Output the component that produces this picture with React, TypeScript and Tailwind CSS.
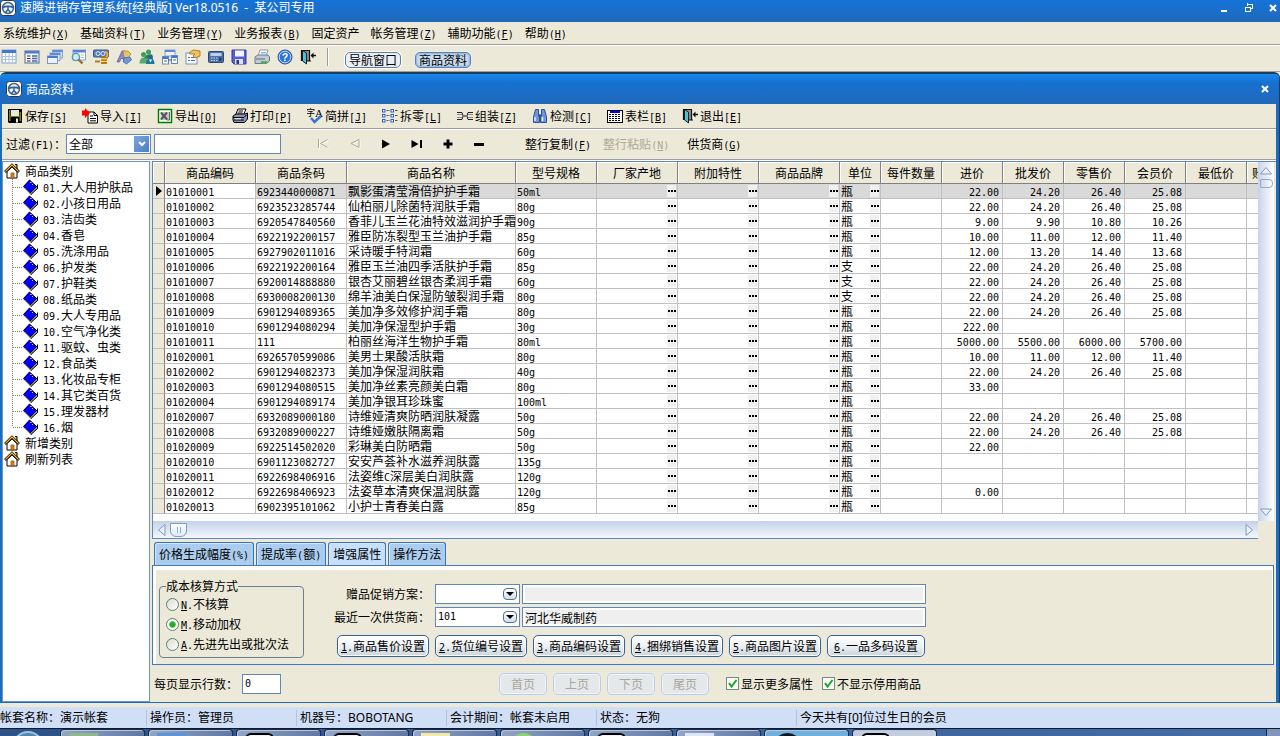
import type { ReactNode } from "react";
import clsx from "clsx";

type Row = {
  code: string;
  barcode: string;
  name: string;
  spec: string;
  unit: string;
  prices: string[];
};

const STD = ["22.00", "24.20", "26.40", "25.08"];

const ROWS: Row[] = [
  { code: "01010001", barcode: "6923440000871", name: "飘影蛋清莹滑倍护护手霜", spec: "50ml", unit: "瓶", prices: STD },
  { code: "01010002", barcode: "6923523285744", name: "仙柏丽儿除菌特润肤手霜", spec: "80g", unit: "瓶", prices: STD },
  { code: "01010003", barcode: "6920547840560", name: "香菲儿玉兰花油特效滋润护手霜", spec: "90g", unit: "瓶", prices: ["9.00", "9.90", "10.80", "10.26"] },
  { code: "01010004", barcode: "6922192200157", name: "雅臣防冻裂型玉兰油护手霜", spec: "85g", unit: "瓶", prices: ["10.00", "11.00", "12.00", "11.40"] },
  { code: "01010005", barcode: "6927902011016", name: "采诗暖手特润霜", spec: "60g", unit: "瓶", prices: ["12.00", "13.20", "14.40", "13.68"] },
  { code: "01010006", barcode: "6922192200164", name: "雅臣玉兰油四季活肤护手霜", spec: "85g", unit: "支", prices: STD },
  { code: "01010007", barcode: "6920014888880", name: "银杏艾丽碧丝银杏柔润手霜", spec: "60g", unit: "支", prices: STD },
  { code: "01010008", barcode: "6930008200130", name: "绵羊油美白保湿防皱裂润手霜", spec: "80g", unit: "支", prices: STD },
  { code: "01010009", barcode: "6901294089365", name: "美加净多效修护润手霜", spec: "80g", unit: "瓶", prices: STD },
  { code: "01010010", barcode: "6901294080294", name: "美加净保湿型护手霜", spec: "30g", unit: "瓶", prices: ["222.00"] },
  { code: "01010011", barcode: "111", name: "柏丽丝海洋生物护手霜", spec: "80ml", unit: "瓶", prices: ["5000.00", "5500.00", "6000.00", "5700.00"] },
  { code: "01020001", barcode: "6926570599086", name: "美男士果酸活肤霜", spec: "80g", unit: "瓶", prices: ["10.00", "11.00", "12.00", "11.40"] },
  { code: "01020002", barcode: "6901294082373", name: "美加净保湿润肤霜", spec: "40g", unit: "瓶", prices: STD },
  { code: "01020003", barcode: "6901294080515", name: "美加净丝素亮颜美白霜", spec: "80g", unit: "瓶", prices: ["33.00"] },
  { code: "01020004", barcode: "6901294089174", name: "美加净银耳珍珠蜜", spec: "100ml", unit: "瓶", prices: [] },
  { code: "01020007", barcode: "6932089000180", name: "诗维娅清爽防晒润肤凝露", spec: "50g", unit: "瓶", prices: STD },
  { code: "01020008", barcode: "6932089000227", name: "诗维娅嫩肤隔离霜", spec: "50g", unit: "瓶", prices: STD },
  { code: "01020009", barcode: "6922514502020", name: "彩琳美白防晒霜", spec: "50g", unit: "瓶", prices: ["22.00"] },
  { code: "01020010", barcode: "6901123082727", name: "安安芦荟补水滋养润肤露", spec: "135g", unit: "瓶", prices: [] },
  { code: "01020011", barcode: "6922698406916", name: "法姿维C深层美白润肤露", spec: "120g", unit: "瓶", prices: [] },
  { code: "01020012", barcode: "6922698406923", name: "法姿草本清爽保温润肤露", spec: "120g", unit: "瓶", prices: ["0.00"] },
  { code: "01020013", barcode: "6902395101062", name: "小护士青春美白露", spec: "85g", unit: "瓶", prices: [] },
];

const CATEGORIES = [
  "01.大人用护肤品",
  "02.小孩日用品",
  "03.洁齿类",
  "04.香皂",
  "05.洗涤用品",
  "06.护发类",
  "07.护鞋类",
  "08.纸品类",
  "09.大人专用品",
  "10.空气净化类",
  "11.驱蚊、虫类",
  "12.食品类",
  "13.化妆品专柜",
  "14.其它类百货",
  "15.理发器材",
  "16.烟",
];

const MENUS = [
  "系统维护(&X)",
  "基础资料(&T)",
  "业务管理(&Y)",
  "业务报表(&B)",
  "固定资产",
  "帐务管理(&Z)",
  "辅助功能(&F)",
  "帮助(&H)",
];

const HEADERS = [
  "商品编码",
  "商品条码",
  "商品名称",
  "型号规格",
  "厂家产地",
  "附加特性",
  "商品品牌",
  "单位",
  "每件数量",
  "进价",
  "批发价",
  "零售价",
  "会员价",
  "最低价",
];

// Half-width characters use a 6px mono face; "&" marks the accelerator key.
function T({ s }: { s: string }) {
  return (
    <>
      {s.split(/([\x20-\x7e]+)/).map((part, i) => {
        if (!/^[\x20-\x7e]+$/.test(part)) return part;
        const at = part.indexOf("&");
        return (
          <span key={i} className="font-['DejaVu_Sans_Mono',monospace] text-[10px] leading-none">
            {at < 0 ? (
              part
            ) : (
              <>
                {part.slice(0, at)}
                <u>{part[at + 1]}</u>
                {part.slice(at + 2)}
              </>
            )}
          </span>
        );
      })}
    </>
  );
}

function Svg({ children, size = 16 }: { children: ReactNode; size?: number }) {
  return (
    <svg viewBox="0 0 16 16" width={size} height={size} className="shrink-0" aria-hidden="true">
      {children}
    </svg>
  );
}

function WheelIcon() {
  return (
    <Svg>
      <rect x="0.5" y="0.5" width="15" height="15" rx="3" fill="#fff" stroke="#26394f" />
      <circle cx="8" cy="8" r="5.500" fill="#eaf2fb" stroke="#47607f" strokeWidth="1.500" />
      <path d="M2.800 7.500C5 6 11 6 13.200 7.500" fill="none" stroke="#2f5f9c" strokeWidth="1.800" />
      <path d="M8 7v3M8 9.500l-2.500 3M8 9.500l2.500 3" fill="none" stroke="#2f5f9c" strokeWidth="1.400" />
    </Svg>
  );
}

const TOOL_ICONS: { label: string; art: ReactNode }[] = [
  {
    label: "表格",
    art: (
      <>
        <rect x="1" y="1" width="14" height="13" fill="#fff" stroke="#7fa3d8" />
        <rect x="1" y="1" width="14" height="3" fill="#3f78cf" />
        <path d="M1 7.500h14M1 10.500h14M4.500 4v10M8 4v10M11.500 4v10" stroke="#a9c3ea" />
      </>
    ),
  },
  {
    label: "表单",
    art: (
      <>
        <rect x="1" y="2" width="14" height="12" fill="#f4f7fc" stroke="#4c6a97" />
        <rect x="1" y="2" width="14" height="2.500" fill="#4f7dc4" />
        <path d="M3 7h3.500M3 9.500h3.500M3 12h3.500" stroke="#333" />
        <path d="M8 7h5.500M8 9.500h5.500M8 12h5.500" stroke="#4c6a97" strokeWidth="1.500" />
      </>
    ),
  },
  {
    label: "层叠",
    art: (
      <>
        <rect x="5.500" y="1" width="10" height="8" fill="#c9daf3" stroke="#8aa6d6" />
        <rect x="5.500" y="1" width="10" height="2" fill="#5c8cd8" />
        <rect x="3" y="4" width="10" height="7.500" fill="#dfe9f8" stroke="#8aa6d6" />
        <rect x="3" y="4" width="10" height="2" fill="#5c8cd8" />
        <rect x="0.500" y="7" width="10" height="7.500" fill="#eef3fb" stroke="#8096bd" />
        <rect x="0.500" y="7" width="10" height="2" fill="#4a7bcc" />
      </>
    ),
  },
  {
    label: "查询",
    art: (
      <>
        <rect x="3" y="1" width="12.500" height="10" fill="#fff" stroke="#7fa3d8" />
        <rect x="3" y="1" width="12.500" height="2.500" fill="#5286da" />
        <path d="M11 6h3M11 8.500h3" stroke="#a9b9d4" />
        <circle cx="6" cy="8" r="3.600" fill="#c7eef7" stroke="#5f93b0" strokeWidth="1.400" />
        <path d="M8.500 10.500l4 4" stroke="#8a7136" strokeWidth="2.400" />
      </>
    ),
  },
  {
    label: "收款",
    art: (
      <>
        <rect x="0.500" y="1" width="15" height="7" rx="1" fill="#547ec2" stroke="#3b568c" />
        <circle cx="5" cy="4.500" r="2" fill="none" stroke="#dbe7fa" />
        <circle cx="10" cy="4.500" r="2" fill="none" stroke="#dbe7fa" />
        <path d="M8 8.500h7M8 11h6M2 12.500h5M8 14h6" stroke="#b57a14" strokeWidth="2" />
        <path d="M12 3c3 0 3.500 3 1 5" stroke="#e6aa2c" strokeWidth="2" fill="none" />
        <path d="M8 10h6M9 12.500h4" stroke="#f6cf63" />
      </>
    ),
  },
  {
    label: "字典",
    art: (
      <>
        <path d="M1 13L6 2h3l1 11H7.500V9.500H5L3.500 13z" fill="#8c86cf" stroke="#5a559e" strokeWidth="0.700" />
        <path d="M7 2h5l3 3-6 8z" fill="#e5c46c" stroke="#a38336" strokeWidth="0.700" />
        <path d="M8 9l6-1 1.500 3-5 4-3-2z" fill="#6f9ae2" stroke="#42589b" strokeWidth="0.700" />
      </>
    ),
  },
  {
    label: "客户",
    art: (
      <>
        <circle cx="9.500" cy="3" r="2.500" fill="#3f9f58" />
        <path d="M5 10c0-6 9-6 9 0z" fill="#2f8a4c" />
        <circle cx="4.500" cy="5.500" r="2.500" fill="#3f9f58" />
        <path d="M0.500 14.500c0-8 8.500-8 8.500 0z" fill="#58a970" />
        <path d="M7 15c0-8 8.500-8 8.500 0z" fill="#1f75a3" />
        <circle cx="11.500" cy="7.500" r="2.300" fill="#27639d" />
        <path d="M10 10.500l1.500 3 1.500-3z" fill="#fff" />
      </>
    ),
  },
  {
    label: "关系",
    art: (
      <>
        <rect x="3" y="1" width="10" height="6" fill="#eef3fb" stroke="#8aa0c8" />
        <rect x="3" y="1" width="10" height="2" fill="#5c8cd8" />
        <rect x="0.500" y="7.500" width="6" height="7.500" fill="#fff" stroke="#6a87bb" />
        <rect x="9.500" y="6.500" width="6" height="8" fill="#fff" stroke="#6a87bb" />
        <path d="M1 9h5M10 8h5" stroke="#3f78cf" strokeWidth="2" />
        <path d="M2 12h3M11 11h3M6 11h4" stroke="#44618f" />
      </>
    ),
  },
  {
    label: "属性",
    art: (
      <>
        <rect x="1" y="4" width="11" height="11" fill="#f7f9fc" stroke="#7b93bb" />
        <path d="M3 8.500h2M6 8.500h4M3 11.500h2M6 11.500h4" stroke="#5b6f94" />
        <path d="M4 4l4-3 7 1v5l-5 2-2-2 2-2H5z" fill="#f2c25c" stroke="#9c6b1c" strokeWidth="0.800" />
      </>
    ),
  },
  {
    label: "计算器",
    art: (
      <>
        <rect x="0.500" y="2.500" width="15" height="11" rx="1" fill="#4e70a8" stroke="#2d4774" />
        <rect x="2.500" y="4" width="11" height="3" fill="#bcd0ee" />
        <path d="M3 9h7M3 11.500h7" stroke="#c5d5ee" strokeDasharray="1.500 1" />
        <rect x="11" y="8.500" width="2.500" height="3.500" fill="#27406b" />
      </>
    ),
  },
  {
    label: "保存",
    art: (
      <>
        <path d="M1 1h14v14H3l-2-2z" fill="#5560cf" stroke="#363f9e" />
        <rect x="4" y="1.500" width="9" height="6" fill="#f3f5ff" />
        <rect x="4" y="10" width="8" height="5" fill="#dcdff5" />
        <rect x="5.500" y="11" width="2.500" height="4" fill="#2c3380" />
      </>
    ),
  },
  {
    label: "打印",
    art: (
      <>
        <path d="M6 1h8l-2 6H4z" fill="#fff" stroke="#8f9bab" />
        <path d="M1 8l3-2h10l1.500 2v4l-3 2.500H1z" fill="#c3cad6" stroke="#6b788c" />
        <path d="M7 12h6v2.500H7z" fill="#57b34b" />
        <path d="M7 3.500h5M6.500 5h5" stroke="#8bb0dd" />
        <path d="M2 10h9" stroke="#5c6879" />
      </>
    ),
  },
  {
    label: "帮助主题",
    art: (
      <>
        <circle cx="8" cy="8" r="7" fill="#2f72d8" stroke="#1f55ad" />
        <circle cx="8" cy="8" r="5.800" fill="none" stroke="#cfe1fa" strokeWidth="0.900" />
        <text x="8" y="11.800" fontSize="10.500" fontWeight="bold" textAnchor="middle" fill="#fff" fontFamily="Liberation Sans">
          ?
        </text>
      </>
    ),
  },
  { label: "退出系统", art: <DoorArt /> },
];

function DoorArt() {
  return (
    <>
      <path d="M1.500 12V1.500h8V12" fill="#8f8f8f" stroke="#111" strokeWidth="1.200" />
      <path d="M2.500 1.500l4 2.500v11l-4-3z" fill="#4fc0d8" stroke="#111" strokeWidth="0.900" />
      <path d="M6 12h5" stroke="#111" />
      <path d="M10.500 6.500l3-3v2.200H16v1.600h-2.500v2.200z" fill="#111" />
    </>
  );
}

const ACTIONS: { text: string; art: ReactNode }[] = [
  {
    text: "保存[&S]",
    art: (
      <>
        <path d="M1 1h14v14H2l-1-1z" fill="#000" />
        <path d="M2 2h1.500v11H2zM12.500 4H14v9h-1.500zM3 8h10v1H3z" fill="#808000" />
        <rect x="4" y="2" width="8" height="6" fill="#ece9d8" />
        <rect x="9" y="10.500" width="2" height="4" fill="#ece9d8" />
      </>
    ),
  },
  {
    text: "导入[&I]",
    art: (
      <>
        <path d="M6 4h6l3.500 3.500V15H6z" fill="#fff" stroke="#000" />
        <path d="M12 4v3.500h3.500M8 8h3M8 10.500h6M8 12.800h6" stroke="#000" fill="none" />
        <path d="M0 2.500h3V0l5 5-5 5V7.500H0z" fill="#f00" />
      </>
    ),
  },
  {
    text: "导出[&O]",
    art: (
      <>
        <rect x="1.500" y="1.500" width="13" height="13" fill="#fff" stroke="#008000" strokeWidth="1.500" />
        <rect x="3.500" y="4" width="9" height="8" fill="#c8c8c8" />
        <path d="M4 4.500l6 7M10 4.500l-6 7" stroke="#555" strokeWidth="2" />
        <path d="M10 12h2.500M12.500 4v8" stroke="#666" />
      </>
    ),
  },
  {
    text: "打印[&P]",
    art: (
      <>
        <path d="M6 1h8l-2.500 6H3.500z" fill="#fff" stroke="#000" />
        <path d="M1 8l3-2h9l2.500-1v6l-3 3.500H2L1 12z" fill="#8d93b8" stroke="#000" />
        <path d="M1 9.500h11l3-3M2 12h10" stroke="#000" fill="none" />
        <path d="M6.500 3h4.500M5.500 5h5" stroke="#000" />
        <path d="M3 10.800h6" stroke="#fff" />
      </>
    ),
  },
  {
    text: "简拼[&J]",
    art: (
      <>
        <text x="-1" y="8" fontSize="9" fill="#000" fontFamily="Noto Sans CJK SC">字</text>
        <text x="8" y="9" fontSize="11" fill="#000" fontFamily="Liberation Serif">A</text>
        <path d="M4 10l3.500 4L14 8" fill="none" stroke="#3f72d0" strokeWidth="2.500" />
      </>
    ),
  },
  {
    text: "拆零[&L]",
    art: (
      <>
        <g fill="#fff" stroke="#2f5fc4">
          <rect x="0.500" y="1.500" width="2.500" height="2.500" />
          <rect x="0.500" y="6.500" width="2.500" height="2.500" />
          <rect x="0.500" y="11.500" width="2.500" height="2.500" />
          <rect x="9" y="1.500" width="2.500" height="2.500" />
          <rect x="9" y="6.500" width="2.500" height="2.500" />
          <rect x="9" y="11.500" width="2.500" height="2.500" />
        </g>
        <path d="M4.500 2.500h3M4.500 7.500h3M4.500 12.500h3M13 2.500h3M13 7.500h3M13 12.500h3" stroke="#555" strokeDasharray="2 0.500" />
      </>
    ),
  },
  {
    text: "组装[&Z]",
    art: (
      <>
        <path d="M0 4.500h5l1 3h4l1-3h5M0 11.500h5l1-3h4l1 3h5" fill="none" stroke="#222" />
        <path d="M0 6.500h5M11 6.500h5M0 9.500h5M11 9.500h5" stroke="#888" />
        <path d="M5 8h6" stroke="#777" strokeWidth="2" />
      </>
    ),
  },
  {
    text: "检测[&C]",
    art: (
      <>
        <path d="M3.500 1.500h3V6l1 2v6.500h-6V9z" fill="#6f95dc" stroke="#2e4f92" />
        <path d="M12.500 1.500h-3V6l-1 2v6.500h6V9z" fill="#6f95dc" stroke="#2e4f92" />
        <path d="M3 9v4M10.500 9v4" stroke="#e1ebfb" strokeWidth="1.500" />
        <path d="M6 7.500h4" stroke="#2e4f92" strokeWidth="2" />
      </>
    ),
  },
  {
    text: "表栏[&B]",
    art: (
      <g shapeRendering="crispEdges">
        <rect x="0" y="2" width="16" height="13" fill="#000" />
        <rect x="1" y="3" width="14" height="11" fill="#fff" />
        <rect x="3" y="3" width="10" height="2" fill="#00f" />
        <path d="M2 6.500h12M2 8.500h12M2 10.500h12M2 12.500h12" stroke="#000" strokeDasharray="2 1" />
      </g>
    ),
  },
  { text: "退出[&E]", art: <DoorArt /> },
];

function HomeIcon() {
  return (
    <Svg>
      <path d="M3 8.500V15h10V8.500L8 4z" fill="#fff" stroke="#000" />
      <path d="M11 1.500h2V6" fill="#f90" stroke="#000" />
      <path d="M1 9L8 2l7 7" fill="none" stroke="#000" strokeWidth="2.600" />
      <path d="M1.400 8.600L8 2l6.600 6.600" fill="none" stroke="#ffb52e" strokeWidth="1.300" />
      <path d="M7 15v-5h3v5z" fill="#e08214" stroke="#8a4b00" strokeWidth="0.700" />
    </Svg>
  );
}

function BookIcon() {
  return (
    <Svg>
      <path d="M7 14.500l1 1 6.500-6V6" fill="#8a8a8a" stroke="#000" />
      <path d="M6.500 1L0.500 7.500 7 14l6.500-6.500z" fill="#00f" stroke="#000" />
      <path d="M1 8.500l6 6" stroke="#9a9a9a" />
      <path d="M7 3.500h1.500M9 5.500h1" stroke="#fff" strokeWidth="0.800" />
      <path d="M14.500 5.500v4" stroke="#000" />
    </Svg>
  );
}

function Branch({ last }: { last: boolean }) {
  return (
    <svg width="12" height="16" className="shrink-0" shapeRendering="crispEdges" aria-hidden="true">
      <path d={last ? "M1.500 0V8" : "M1.500 0V16"} stroke="#808080" strokeDasharray="1 1" />
      <path d="M2 8.500H12" stroke="#808080" strokeDasharray="1 1" />
    </svg>
  );
}

function CloseGlyph() {
  return (
    <svg width="8" height="8" viewBox="0 0 8 8" aria-hidden="true">
      <path d="M1 1l6 6M7 1L1 7" stroke="#fff" strokeWidth="2" />
    </svg>
  );
}

function Divider() {
  return <div className="h-0.5 shrink-0 border-b border-white bg-[#9d9da1]" />;
}

function TreePanel() {
  return (
    <nav className="w-[148px] shrink-0 border border-[#6b95c8] bg-white pt-px leading-4" aria-label="商品类别">
      <a href="#all" className="flex h-4 items-center gap-1 pl-px">
        <HomeIcon />
        <span className="pl-px">商品类别</span>
      </a>
      <ul className="pl-2">
        {CATEGORIES.map((c, i) => (
          <li key={c} className="h-4">
            <a href={`#c${i + 1}`} className="flex h-4 items-center whitespace-nowrap">
              <Branch last={i === CATEGORIES.length - 1} />
              <BookIcon />
              <span className="pl-1">
                <T s={c} />
              </span>
            </a>
          </li>
        ))}
      </ul>
      {["新增类别", "刷新列表"].map((t) => (
        <a key={t} href="#action" className="flex h-4 items-center gap-1 pl-px">
          <HomeIcon />
          <span className="pl-px">{t}</span>
        </a>
      ))}
    </nav>
  );
}

function Dots() {
  return (
    <button type="button" aria-label="选择" className="flex h-3 w-[9px] items-center justify-center gap-px bg-[#f0f0f0]">
      <i className="size-0.5 bg-black" />
      <i className="size-0.5 bg-black" />
      <i className="size-0.5 bg-black" />
    </button>
  );
}

const CELL = "h-[15px] border-r border-b border-[#c0c0c0] p-0 pl-px leading-[14px] whitespace-nowrap";
const HEAD = "h-[22px] border-r border-b border-[#808080] p-0 font-normal shadow-[inset_1px_1px_0_#fff] whitespace-nowrap";

function DataGrid() {
  return (
    <div className="min-w-0 flex-1 overflow-hidden bg-white">
      <table className="w-full table-fixed border-separate border-spacing-0">
        <colgroup>
          <col className="w-3" />
          <col className="w-[91px]" />
          <col className="w-[91px]" />
          <col className="w-[169px]" />
          <col className="w-[81px]" />
          <col className="w-[81px]" />
          <col className="w-[81px]" />
          <col className="w-[81px]" />
          <col className="w-[41px]" />
          <col className="w-[61px]" />
          <col className="w-[61px]" />
          <col className="w-[61px]" />
          <col className="w-[61px]" />
          <col className="w-[61px]" />
          <col className="w-[61px]" />
          <col />
        </colgroup>
        <thead className="bg-[#ece9d8]">
          <tr>
            <th className={HEAD} />
            {HEADERS.map((h) => (
              <th key={h} className={HEAD}>
                {h}
              </th>
            ))}
            <th className="border-b border-[#808080] p-0 pl-[5px] text-left font-normal whitespace-nowrap shadow-[inset_1px_1px_0_#fff]">账</th>
          </tr>
        </thead>
        <tbody>
          {ROWS.map((r, i) => (
            <tr key={r.code} className={clsx(i === 0 && "bg-[#d9d9d9]")}>
              <td className="h-[15px] border-r border-b border-[#808080] border-b-[#c0c0c0] bg-[#ece9d8] p-0">
                {i === 0 && (
                  <svg width="7" height="10" className="ml-[3px] block" aria-hidden="true">
                    <path d="M0 0l6 5-6 5z" fill="#000" />
                  </svg>
                )}
              </td>
              <td className={clsx(CELL, "bg-white")}>
                <T s={r.code} />
              </td>
              <td className={CELL}>
                <T s={r.barcode} />
              </td>
              <td className={CELL}>
                <T s={r.name} />
              </td>
              <td className={CELL}>
                <T s={r.spec} />
              </td>
              {["产地", "特性", "品牌"].map((k) => (
                <td key={k} className={CELL}>
                  <div className="flex justify-end pr-px">
                    <Dots />
                  </div>
                </td>
              ))}
              <td className={CELL}>
                <div className="flex h-[14px] items-center justify-between pr-px">
                  {r.unit}
                  <Dots />
                </div>
              </td>
              <td className={CELL} />
              {[0, 1, 2, 3, 4].map((k) => (
                <td key={k} className={clsx(CELL, "pr-[3px] text-right")}>
                  <T s={r.prices[k] ?? ""} />
                </td>
              ))}
              <td className="border-b border-[#c0c0c0] p-0" />
            </tr>
          ))}
        </tbody>
      </table>
    </div>
  );
}

function VScroll() {
  return (
    <div className="flex w-4 shrink-0 flex-col items-center bg-linear-to-r from-[#c6d4ea] to-white py-1">
      <button type="button" aria-label="向上">
        <svg width="14" height="9" className="block" aria-hidden="true">
          <path d="M1.500 8L7 1.500 12.500 8z" fill="#e9f0f9" stroke="#7f9dc0" />
        </svg>
      </button>
      <div className="mt-1 h-[9px] w-[13px] rounded-r-sm border border-[#8fabd0] bg-linear-to-r from-[#cbd8ea] to-white" />
      <button type="button" aria-label="向下" className="mt-auto">
        <svg width="14" height="9" className="block" aria-hidden="true">
          <path d="M1.500 1L7 7.500 12.500 1z" fill="#e9f0f9" stroke="#7f9dc0" />
        </svg>
      </button>
    </div>
  );
}

function HScroll() {
  return (
    <div className="flex h-[17px] items-center bg-linear-to-b from-[#c3d1e8] to-[#f4f8fd] px-1">
      <button type="button" aria-label="向左">
        <svg width="9" height="14" className="block" aria-hidden="true">
          <path d="M8 1.500L1.500 7 8 12.500z" fill="#e9f0f9" stroke="#7f9dc0" />
        </svg>
      </button>
      <div className="ml-1 flex h-[14px] w-[17px] items-center justify-center gap-0.5 rounded-b-md border border-[#7f9dc0] bg-linear-to-b from-white to-[#dfe8f4]">
        <i className="h-1.5 w-px bg-[#8fabd0]" />
        <i className="h-1.5 w-px bg-[#8fabd0]" />
      </div>
      <button type="button" aria-label="向右" className="ml-auto">
        <svg width="9" height="14" className="block" aria-hidden="true">
          <path d="M1 1.500L7.500 7 1 12.500z" fill="#e9f0f9" stroke="#7f9dc0" />
        </svg>
      </button>
    </div>
  );
}

const TABS = ["价格生成幅度(%)", "提成率(额)", "增强属性", "操作方法"];

const COSTING = [
  { key: "N", text: "&N.不核算" },
  { key: "M", text: "&M.移动加权" },
  { key: "A", text: "&A.先进先出或批次法" },
];

const SETTINGS = [
  "&1.商品售价设置",
  "&2.货位编号设置",
  "&3.商品编码设置",
  "&4.捆绑销售设置",
  "&5.商品图片设置",
  "&6.一品多码设置",
];

const FIELD = "h-5 border border-[#5f87bd] px-0.5 outline-none";

function ComboBox({ id, value }: { id: string; value: string }) {
  return (
    <div className="flex h-5 w-[85px] items-center border border-[#5f87bd] bg-white pr-0.5">
      <input id={id} defaultValue={value} className="w-0 flex-1 px-0.5 font-['DejaVu_Sans_Mono',monospace] text-[10px] outline-none" />
      <button
        type="button"
        aria-label="展开"
        className="flex h-3 w-[14px] items-center justify-center rounded-sm border border-[#53728f] bg-linear-to-b from-white to-[#d3dfeb]"
      >
        <svg width="8" height="4" aria-hidden="true">
          <path d="M0 0h8L4 4z" fill="#000" />
        </svg>
      </button>
    </div>
  );
}

function DetailPanel() {
  return (
    <section>
      <div role="tablist" className="flex h-[23px] gap-0.5 pl-0.5">
        {TABS.map((t, i) => (
          <button
            key={t}
            type="button"
            role="tab"
            aria-selected={i === 2}
            className={clsx(
              "rounded-t-[3px] border border-b-0 border-[#3b74b5] px-1 whitespace-nowrap shadow-[inset_1px_1px_0_#d6e8fb]",
              i === 2 ? "bg-[#c6dffb]" : "bg-[#aaccee]",
            )}
          >
            <T s={t} />
          </button>
        ))}
      </div>
      <div className="mr-[2px] flex h-[100px] border border-[#4478b8] shadow-[inset_3px_4px_0_#fff,inset_-1px_0_0_#fff,0_1px_0_#dce6f2]">
        <fieldset className="mt-[13px] ml-1.5 h-[79px] w-[145px] rounded-[4px] border border-[#6a7f96] pt-px">
          <legend className="ml-[6px] bg-[#ece9d8] leading-[14px]">成本核算方式</legend>
          {COSTING.map((c) => (
            <label key={c.key} className="flex h-5 items-center gap-0.5 pl-[6px] whitespace-nowrap">
              <input
                type="radio"
                name="costing"
                defaultChecked={c.key === "M"}
                className="size-[13px] appearance-none rounded-full border border-[#5f7f6f] bg-linear-to-br from-[#dcdcd4] to-white checked:bg-[radial-gradient(circle,#2aa72a_0_2px,#5fcf5f_3px,#fff_4px)]"
              />
              <span>
                <T s={c.text} />
              </span>
            </label>
          ))}
        </fieldset>
        <div className="ml-[29px] pt-[18px]">
          <div className="flex items-center gap-0.5">
            <label htmlFor="promo" className="w-[100px] pr-[3px] text-right whitespace-nowrap">
              赠品促销方案：
            </label>
            <ComboBox id="promo" value="" />
            <input aria-label="赠品促销方案名称" readOnly className={clsx(FIELD, "w-[404px] bg-[#efefef] shadow-[inset_0_0_0_2px_#fff]")} />
          </div>
          <div className="mt-[3px] flex items-center gap-0.5">
            <label htmlFor="vendor" className="w-[100px] pr-[3px] text-right whitespace-nowrap">
              最近一次供货商：
            </label>
            <ComboBox id="vendor" value="101" />
            <input
              aria-label="供货商名称"
              readOnly
              value="河北华威制药"
              className={clsx(FIELD, "w-[404px] bg-[#efefef] shadow-[inset_0_0_0_2px_#fff]")}
            />
          </div>
          <div className="mt-2 ml-1 flex gap-1.5">
            {SETTINGS.map((s, i) => (
              <button
                key={s}
                type="button"
                className={clsx(
                  "h-[22px] rounded-[5px] border border-[#46617d] bg-linear-to-b from-white via-[#edf1f5] to-[#c9d5e0] whitespace-nowrap shadow-[0_0_0_1px_#dfe7ee,inset_0_0_0_1px_#fff]",
                  i === 5 ? "w-[98px]" : "w-[92px]",
                )}
              >
                <T s={s} />
              </button>
            ))}
          </div>
        </div>
      </div>
    </section>
  );
}

function Tick({ label }: { label: string }) {
  return (
    <label className="flex items-center gap-0.5 whitespace-nowrap">
      <span className="relative flex size-[13px]">
        <input type="checkbox" defaultChecked className="size-[13px] appearance-none border border-[#6f8f78] bg-white" />
        <svg viewBox="0 0 13 13" className="pointer-events-none absolute inset-0" aria-hidden="true">
          <path d="M3 6l2.500 3.500L10.500 3" fill="none" stroke="#21a121" strokeWidth="2" />
        </svg>
      </span>
      {label}
    </label>
  );
}

const NAV_GLYPHS: { label: string; d: string; off?: boolean }[] = [
  { label: "首条", d: "M2.500 3v9M11.500 3.500l-7 4 7 4", off: true },
  { label: "上条", d: "M12 3.500l-8 4 8 4z", off: true },
  { label: "下条", d: "M4 3.500l8 4.500-8 4.500z" },
  { label: "末条", d: "M2.500 4l7 4-7 4zM11 4h2v8h-2z" },
  { label: "新增", d: "M6.500 3.500h3v3h3v3h-3v3h-3v-3h-3v-3h3z" },
  { label: "删除", d: "M3 7h10v3H3z" },
];

function FilterBar() {
  return (
    <div className="flex h-[29px] shrink-0 items-center pb-px pl-1">
      <label htmlFor="filter" className="w-[60px] whitespace-nowrap">
        <T s="过滤(F1)：" />
      </label>
      <span className="relative flex h-5">
        <select id="filter" className="h-5 w-[85px] appearance-none border border-[#5f87bd] bg-white pl-0.5 leading-4">
          <option>全部</option>
        </select>
        <span className="pointer-events-none absolute top-0.5 right-0.5 flex h-4 w-[15px] items-center justify-center bg-linear-to-br from-[#79a5dc] to-[#4a7fc6]">
          <svg width="8" height="6" aria-hidden="true">
            <path d="M1 1l3 3 3-3" fill="none" stroke="#fff" strokeWidth="2" />
          </svg>
        </span>
      </span>
      <input aria-label="过滤内容" className={clsx(FIELD, "ml-[3px] w-[127px] bg-white")} />
      <div className="ml-[35px] flex gap-[15px]">
        {NAV_GLYPHS.map((g) => (
          <button key={g.label} type="button" aria-label={g.label} disabled={g.off}>
            <Svg>
              {g.off && <path d={g.d} transform="translate(1 1)" fill="none" stroke="#fff" />}
              <path d={g.d} fill={g.off ? "none" : "#000"} stroke={g.off ? "#aca899" : "none"} />
            </Svg>
          </button>
        ))}
      </div>
      <div className="ml-[38px] flex gap-3 whitespace-nowrap">
        <button type="button">
          <T s="整行复制(&F)" />
        </button>
        <button type="button" disabled className="text-[#aca899]">
          <T s="整行粘贴(&N)" />
        </button>
        <button type="button" className="ml-1.5">
          <T s="供货商(&G)" />
        </button>
      </div>
    </div>
  );
}

function ProductWindow() {
  return (
    <main className="flex min-h-0 flex-1 flex-col rounded-t-md border-t-2 border-r border-[#1d3d5c] bg-[#1a6cc0]">
      <header className="flex h-[30px] shrink-0 items-center gap-1 rounded-t bg-linear-to-b from-[#1987ec] via-[#1670d0] via-30% to-[#1f69b8] pr-2.5 pl-1.5 text-white">
        <WheelIcon />
        <h2>商品资料</h2>
        <button type="button" aria-label="关闭商品资料" className="ml-auto">
          <CloseGlyph />
        </button>
      </header>
      <div className="mr-[3px] mb-px ml-0.5 flex min-h-0 flex-1 flex-col bg-[#ece9d8]">
        <div className="flex h-6 shrink-0 items-center pb-px pl-[5px]">
          {ACTIONS.map((a) => (
            <button key={a.text} type="button" className="flex w-[75px] items-center gap-0.5 whitespace-nowrap">
              <Svg>{a.art}</Svg>
              <span>
                <T s={a.text} />
              </span>
            </button>
          ))}
        </div>
        <Divider />
        <FilterBar />
        <Divider />
        <div className="flex min-h-0 flex-1 gap-0.5">
          <TreePanel />
          <div className="flex min-w-0 flex-1 flex-col">
            <div className="flex min-h-0 flex-1 flex-col border-t border-l border-[#5f87bd]">
              <div className="flex min-h-0 flex-1 pr-0.5">
                <DataGrid />
                <VScroll />
              </div>
              <div className="mr-[18px] border-b border-[#5f87bd]">
                <HScroll />
              </div>
            </div>
            <div className="pt-[3px]">
              <DetailPanel />
            </div>
            <footer className="flex h-[37px] items-center pl-0.5 whitespace-nowrap">
              <label htmlFor="pagesize" className="w-[88px]">
                每页显示行数：
              </label>
              <input
                id="pagesize"
                defaultValue="0"
                className={clsx(FIELD, "w-[39px] bg-white font-['DejaVu_Sans_Mono',monospace] text-[10px]")}
              />
              <div className="ml-[218px] flex gap-1.5">
                {["首页", "上页", "下页", "尾页"].map((p) => (
                  <button
                    key={p}
                    type="button"
                    disabled
                    className="h-[22px] w-12 rounded-[5px] border border-[#c3ccd4] bg-[#e5e8ea] text-[#a7a69c] shadow-[0_0_0_1px_#e4eaef,inset_0_0_0_1px_#f2f4f6]"
                  >
                    {p}
                  </button>
                ))}
              </div>
              <div className="ml-[17px] flex gap-[9px]">
                <Tick label="显示更多属性" />
                <Tick label="不显示停用商品" />
              </div>
            </footer>
          </div>
        </div>
      </div>
    </main>
  );
}

const STATUS = [
  { text: "帐套名称：演示帐套", w: "w-[146px]" },
  { text: "操作员：管理员", w: "w-[150px]" },
  { text: "机器号：BOBOTANG", w: "w-[150px]" },
  { text: "会计期间：帐套未启用", w: "w-[150px]" },
  { text: "状态：无狗", w: "w-[200px]" },
  { text: "今天共有[0]位过生日的会员", w: "flex-1" },
];

const TASKS = [
  "bg-[#8fb98a]",
  "bg-[#5b95d3]",
  "bg-[#f0f4fa] border-2 border-b-0 border-black rounded-t-md",
  "bg-[#f0f4fa] border-2 border-b-0 border-black rounded-t-md",
  "bg-[#f3e9a9]",
  "bg-[#8fd36d] rounded-t-full",
  "bg-[#f0f4fa] border-2 border-b-0 border-black rounded-t-md",
  "bg-[#dfe6f7]",
  "bg-[#10161f] rounded-t-full",
  "bg-[#f0f4fa] border-2 border-b-0 border-black rounded-t-md",
];

function Taskbar() {
  return (
    <div className="flex h-2 shrink-0 items-stretch overflow-hidden border-t border-[#0d1c30] bg-linear-to-r from-[#2c5288] to-[#466da6]">
      <div className="w-[60px] shrink-0 pt-0.5 pl-3">
        <div className="h-8 w-8 rounded-full border-2 border-[#9fc0dc] bg-[#4f86ad]" />
      </div>
      <div className="flex gap-[3px]">
        {TASKS.map((t, i) => (
          <div
            key={i}
            className={clsx(
              "h-7 w-[85px] rounded-t-sm border border-b-0 border-[#172b49] pt-[3px] pl-2 shadow-[inset_1px_1px_0_#b9c7de]",
              i === 9 ? "bg-[#c3cddd]" : i === 8 ? "bg-[#6fb0dc]" : "bg-linear-to-r from-[#93a5c5] to-[#5f77a3]",
            )}
          >
            <div className={clsx("h-6 w-[29px]", t)} />
          </div>
        ))}
      </div>
      <div className="ml-auto h-7 w-[14px] border-l border-[#172b49] bg-[#8196bb]" />
    </div>
  );
}

export default function App() {
  return (
    <div className="flex h-screen flex-col overflow-hidden bg-[#ece9d8] font-['Noto_Sans_CJK_SC',sans-serif] text-xs text-black">
      <header className="flex h-[22px] shrink-0 items-center gap-1 bg-linear-to-b from-[#1473d9] to-[#1f69b8] pr-[3px] text-white">
        <div className="-mt-1.5 flex items-center gap-1">
          <WheelIcon />
          <h1 className="font-['Noto_Sans','Noto_Sans_CJK_SC',sans-serif] whitespace-pre">速腾进销存管理系统[经典版] Ver18.0516  -  某公司专用</h1>
        </div>
        <div className="ml-auto flex items-center gap-[18px] pb-[7px]">
          <button type="button" aria-label="最小化" className="flex h-2 items-end">
            <i className="h-0.5 w-1.5 bg-white" />
          </button>
          <button type="button" aria-label="还原">
            <svg width="8" height="9" className="block" shapeRendering="crispEdges" aria-hidden="true">
              <path d="M2 1h6M7.500 1v5M2.500 0v3M0 4h6M0.500 4v5M5.500 4v5M0 8.500h6M6 5.500h2" fill="none" stroke="#fff" />
            </svg>
          </button>
          <button type="button" aria-label="关闭" className="-ml-0.5">
            <CloseGlyph />
          </button>
        </div>
      </header>
      <nav className="flex h-[22px] shrink-0 items-center gap-[11px] pl-[3px] whitespace-nowrap">
        {MENUS.map((m) => (
          <button key={m} type="button">
            <T s={m} />
          </button>
        ))}
      </nav>
      <Divider />
      <div className="flex h-[26px] shrink-0 items-center border-b border-[#9d9da1]">
        <div className="flex gap-[7px] pl-px">
          {TOOL_ICONS.map((t) => (
            <button key={t.label} type="button" aria-label={t.label} className="-mt-1">
              <Svg>{t.art}</Svg>
            </button>
          ))}
        </div>
        <div className="-mt-1 ml-[11px] h-[18px] w-0.5 border-r border-white bg-[#9d9da1]" />
        <div className="ml-4 flex gap-[14px] pt-0.5">
          <button
            type="button"
            className="h-4 w-14 rounded-[5px] border border-[#5d7d9b] bg-[#e9eff4] leading-[14px] shadow-[0_0_0_1px_#fff]"
          >
            导航窗口
          </button>
          <button
            type="button"
            className="h-4 w-14 rounded-[5px] border border-[#5d83ab] bg-[#c9dcf0] leading-[14px] shadow-[0_0_0_1px_#e4edf7,inset_0_0_2px_1px_#8fb2d8]"
          >
            商品资料
          </button>
        </div>
      </div>
      <ProductWindow />
      <footer className="mt-1 flex h-[21px] shrink-0 items-center bg-[#d0dff5] font-['Noto_Sans','Noto_Sans_CJK_SC',sans-serif] whitespace-nowrap">
        {STATUS.map((s, i) => (
          <div key={s.text} className={clsx("shrink-0", s.w, i > 0 && "border-l border-[#b4c3dc] pl-[3px]")}>
            {s.text}
          </div>
        ))}
      </footer>
      <Taskbar />
    </div>
  );
}
